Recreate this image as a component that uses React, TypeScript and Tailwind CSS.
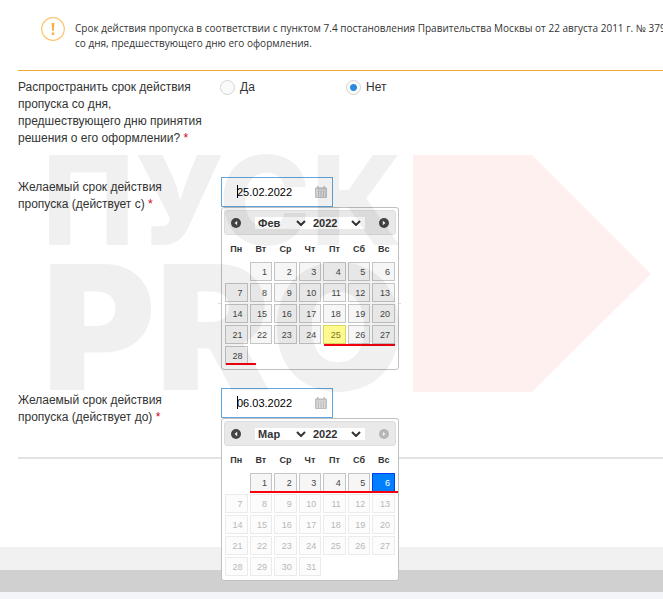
import { useState } from 'react'

const WEEKDAYS = ['Пн', 'Вт', 'Ср', 'Чт', 'Пт', 'Сб', 'Вс']
const MONTHS = ['Янв', 'Фев', 'Мар', 'Апр', 'Май', 'Июн', 'Июл', 'Авг', 'Сен', 'Окт', 'Ноя', 'Дек']
const YEARS = [2021, 2022, 2023]

interface DatePickerProps {
  month: number
  year: number
  offset: number
  days: number
  today?: number
  selected?: number
  lastEnabled?: number
  nextDisabled?: boolean
  strokes: string[]
}

function NavIcon({ flip = false }: { flip?: boolean }) {
  return (
    <svg viewBox="0 0 10 10" className={flip ? 'h-[10px] w-[10px] rotate-180' : 'h-[10px] w-[10px]'} aria-hidden="true">
      <circle cx="5" cy="5" r="5" fill="#444" />
      <path d="M6.2 2.8v4.4L3.6 5z" fill="#fff" />
    </svg>
  )
}

function HeaderSelect({ label, value, options, className }: {
  label: string
  value: string
  options: string[]
  className: string
}) {
  return (
    <div className={`relative ${className}`}>
      <select
        aria-label={label}
        defaultValue={value}
        className="block h-3 w-full appearance-none bg-white pl-[3px] text-[11px] leading-3 font-bold text-[#333]"
      >
        {options.map((o) => <option key={o}>{o}</option>)}
      </select>
      <svg viewBox="0 0 10 6" className="pointer-events-none absolute top-[3px] right-1 h-[6px] w-[10px]" aria-hidden="true">
        <path d="M1 1l4 4 4-4" fill="none" stroke="#333" strokeWidth="2" />
      </svg>
    </div>
  )
}

function dayClass(day: number, p: DatePickerProps) {
  if (day === p.selected) return 'border-[#003eff] bg-[#007fff] text-white'
  if (day === p.today) return 'border-[#dad55e] bg-[#fffa90] text-[#777620]'
  if (p.lastEnabled && day > p.lastEnabled) return 'border-[#ebebeb] bg-[#fcfcfc] text-[#b8b8b8]'
  return 'border-[#c5c5c5] bg-[#f6f6f6] text-[#454545]'
}

function DatePicker(props: DatePickerProps) {
  const { month, year, offset, days, lastEnabled, nextDisabled, strokes } = props
  const weeks: (number | null)[][] = []
  for (let start = 1 - offset; start <= days; start += 7) {
    weeks.push(WEEKDAYS.map((_, i) => (start + i >= 1 && start + i <= days ? start + i : null)))
  }

  return (
    <div className="absolute top-full left-0 z-10 w-[178px] rounded-[3px] border border-[#c0c0c0] bg-white p-[2px] pb-[3px]">
      <div className="flex h-[25px] items-center rounded-[3px] border border-[#ddd] bg-[#e9e9e9] px-[6px]">
        <button type="button" aria-label="Предыдущий месяц"><NavIcon /></button>
        <HeaderSelect label="Месяц" value={MONTHS[month]} options={MONTHS} className="ml-[14px] w-[55px]" />
        <HeaderSelect label="Год" value={String(year)} options={YEARS.map(String)} className="w-[55px]" />
        <button type="button" aria-label="Следующий месяц" disabled={nextDisabled} className="ml-auto disabled:opacity-30">
          <NavIcon flip />
        </button>
      </div>
      <table className="mt-[6px] w-full table-fixed border-separate border-spacing-0">
        <thead>
          <tr className="h-5">
            {WEEKDAYS.map((d) => (
              <th key={d} scope="col" className="p-0 pb-1 text-[9px] leading-3 font-bold text-[#333]">{d}</th>
            ))}
          </tr>
        </thead>
        <tbody>
          {weeks.map((week, w) => (
            <tr key={w}>
              {week.map((day, i) => (
                <td key={i} className="h-[21px] p-px">
                  {day ? (
                    <button
                      type="button"
                      disabled={Boolean(lastEnabled && day > lastEnabled)}
                      className={`block h-[19px] w-full border pr-1 text-right text-[9px] leading-4 ${dayClass(day, props)}`}
                    >
                      {day}
                    </button>
                  ) : null}
                </td>
              ))}
            </tr>
          ))}
        </tbody>
      </table>
      <svg className="pointer-events-none absolute inset-0 h-full w-full overflow-visible" aria-hidden="true">
        {strokes.map((d) => <path key={d} d={d} stroke="#f5000c" strokeWidth="2" fill="none" />)}
      </svg>
    </div>
  )
}

function CalendarIcon() {
  return (
    <svg viewBox="0 0 12 12" className="h-3 w-3" aria-hidden="true">
      <path d="M0 2.5Q0 1.5 1 1.5h1V0h1.5v1.5h5V0H10v1.5h1q1 0 1 1V11q0 1-1 1H1q-1 0-1-1z" fill="#bdbdbd" />
      <path d="M1 4h10" stroke="#f2f2f2" strokeWidth="0.8" />
      <path d="M1.5 6.2h9M1.5 8.2h9M1.5 10.2h9" stroke="#eee" strokeWidth="1.2" strokeDasharray="1.4 1.1" />
    </svg>
  )
}

function DateField({ id, value, picker }: { id: string; value: string; picker: DatePickerProps }) {
  const [text, setText] = useState(value)
  return (
    <div className="relative h-[30px] w-28">
      <input
        id={id}
        type="text"
        value={text}
        onChange={(e) => setText(e.target.value)}
        className="block h-full w-full border border-[#5fa6e0] bg-white pl-[15px] text-[11px] text-black outline-none"
      />
      <span className="absolute top-2 left-4 h-[13px] w-px bg-black" aria-hidden="true" />
      <button type="button" aria-label="Открыть календарь" className="absolute top-[9px] right-[6px]">
        <CalendarIcon />
      </button>
      <DatePicker {...picker} />
    </div>
  )
}

function Required() {
  return <span className="text-[#d0021b]">*</span>
}

function Watermark() {
  return (
    <svg
      className="pointer-events-none absolute top-0 left-0 z-20 h-[599px] w-[663px]"
      viewBox="0 0 663 599"
      aria-hidden="true"
    >
      <g className="font-['Inter']" fill="#000" fillOpacity="0.06">
        <text className="font-extrabold" x="42" y="245" fontSize="124">ПУСК</text>
        <text className="font-black" x="42" y="390" fontSize="173">PRO</text>
      </g>
      <path d="M413 155h119l119 119-119 118H413z" fill="#f00" fillOpacity="0.06" />
      <path d="M218 303.5h3M399 303.5h2" stroke="#ddd" />
    </svg>
  )
}

export default function App() {
  return (
    <div className="relative min-h-screen overflow-hidden bg-[#f4f5f8] font-['Liberation_Sans',sans-serif] text-[#333]">
      <main className="h-[547px] bg-white pl-[18px]">
        <div className="flex h-[71px] gap-[10px] border-b border-[#f0a830] pt-[17px] pl-[23px]">
          <svg viewBox="0 0 24 24" className="h-6 w-6 shrink-0" aria-hidden="true">
            <circle cx="12" cy="12" r="11.3" fill="none" stroke="#fbc56d" strokeWidth="1.2" />
            <path d="M10.6 6h2.8l-.6 8h-1.6zM10.8 15.6h2.4V18h-2.4z" fill="#fbb03b" />
          </svg>
          <p className="pt-1 font-['Open_Sans',sans-serif] text-[10px] leading-[15px] whitespace-nowrap">
            Срок действия пропуска в соответствии с пунктом 7.4 постановления Правительства Москвы от 22 августа 2011 г. № 379
            <br />
            со дня, предшествующего дню его оформления.
          </p>
        </div>

        <form className="border-b-2 border-[#e3e3e3] text-xs leading-[17px]">
          <fieldset className="flex h-[106px] pt-2">
            <legend className="float-left w-[202px] pr-2">
              Распространить срок действия пропуска со дня, предшествующего дню принятия решения о его оформлении? <Required />
            </legend>
            <div className="flex">
              {['Да', 'Нет'].map((option) => (
                <label key={option} className="flex h-[17px] w-[126px] items-center gap-[5px]">
                  <input
                    type="radio"
                    name="extend"
                    defaultChecked={option === 'Нет'}
                    className="h-[15px] w-[15px] appearance-none rounded-full border border-[#d5d5d5] bg-[#fafafa] checked:bg-[radial-gradient(circle,#2a8be0_3px,#fafafa_4px)]"
                  />
                  {option}
                </label>
              ))}
            </div>
          </fieldset>

          <div className="flex h-[211px]">
            <label htmlFor="date-from" className="w-[203px] pt-[2px] pr-8">
              Желаемый срок действия пропуска (действует с) <Required />
            </label>
            <DateField
              id="date-from"
              value="25.02.2022"
              picker={{ month: 1, year: 2022, offset: 1, days: 28, today: 25, strokes: ['M102 137h71', 'M4 156h30'] }}
            />
          </div>

          <div className="flex h-[69px]">
            <label htmlFor="date-to" className="w-[203px] pt-1 pr-8">
              Желаемый срок действия пропуска (действует до) <Required />
            </label>
            <DateField
              id="date-to"
              value="06.03.2022"
              picker={{
                month: 2,
                year: 2022,
                offset: 1,
                days: 31,
                selected: 6,
                lastEnabled: 6,
                nextDisabled: true,
                strokes: ['M28 73h148'],
              }}
            />
          </div>
        </form>
      </main>
      <footer>
        <div className="h-[23px] bg-[#f1f1f1]" />
        <div className="h-[22px] bg-[#d0d0d0]" />
      </footer>
      <Watermark />
    </div>
  )
}
